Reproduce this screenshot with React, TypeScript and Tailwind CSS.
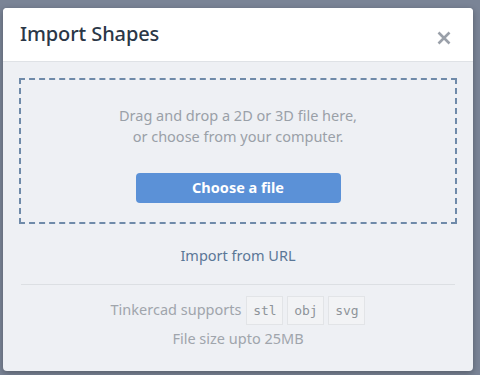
export default function App() {
  return (
    <div
      className="min-h-screen w-full bg-[#7a8496] pt-2 pl-[3px] pr-[7px] pb-1"
      style={{ fontFamily: '"Noto Sans", "Open Sans", sans-serif' }}
    >
      <div className="w-[470px] h-[363px] rounded-[4px] overflow-hidden bg-[#eef0f4] shadow-[0_2px_6px_rgba(0,0,0,0.3)] flex flex-col">
        {/* Header */}
        <div className="h-[54px] bg-white border-b border-[#dfe2e6] flex items-center justify-between pl-[17px] pr-[22px]">
          <h1 className="text-[20px] text-[#2b3747] font-medium tracking-[-0.1px] mt-[-2px]">Import Shapes</h1>
          <button className="text-[#9aa0a9] mt-[6px]">
            <svg width="14" height="14" viewBox="0 0 14 14">
              <path d="M1.5 1.5 L12.5 12.5 M12.5 1.5 L1.5 12.5" stroke="currentColor" strokeWidth="2.6" strokeLinecap="butt" />
            </svg>
          </button>
        </div>

        {/* Body */}
        <div className="flex-1 px-4 pt-4">
          <div className="h-[146px] border-2 border-dashed border-[#6f8aa9] flex flex-col items-center pt-[25px]">
            <p className="text-[14.5px] leading-[21px] text-[#9aa0a8] text-center">
              Drag and drop a 2D or 3D file here,
              <br />
              or choose from your computer.
            </p>
            <button className="mt-[26px] w-[205px] h-[30px] rounded-[4px] bg-[#5b91d7] text-white text-[14.5px] font-bold">
              Choose a file
            </button>
          </div>

          <div className="mt-[21px] text-center text-[14.5px] text-[#5b7797]">Import from URL</div>

          <div className="mt-[17px] mx-[2px] border-t border-[#dcdfe3]" />

          <div className="mt-[11px] flex items-center justify-center gap-[4px] text-[14.5px] text-[#a0a5ac]">
            <span className="mr-[1px]">Tinkercad supports</span>
            {['stl', 'obj', 'svg'].map(ext => (
              <span
                key={ext}
                className="h-[29px] w-[37px] flex items-center justify-center bg-[#f2f3f5] border border-[#e2e4e7] text-[13px] text-[#8e939a]"
                style={{ fontFamily: '"DejaVu Sans Mono", monospace' }}
              >
                {ext}
              </span>
            ))}
          </div>

          <div className="mt-[3px] text-center text-[14.5px] text-[#a0a5ac]">File size upto 25MB</div>
        </div>
      </div>
    </div>
  )
}
